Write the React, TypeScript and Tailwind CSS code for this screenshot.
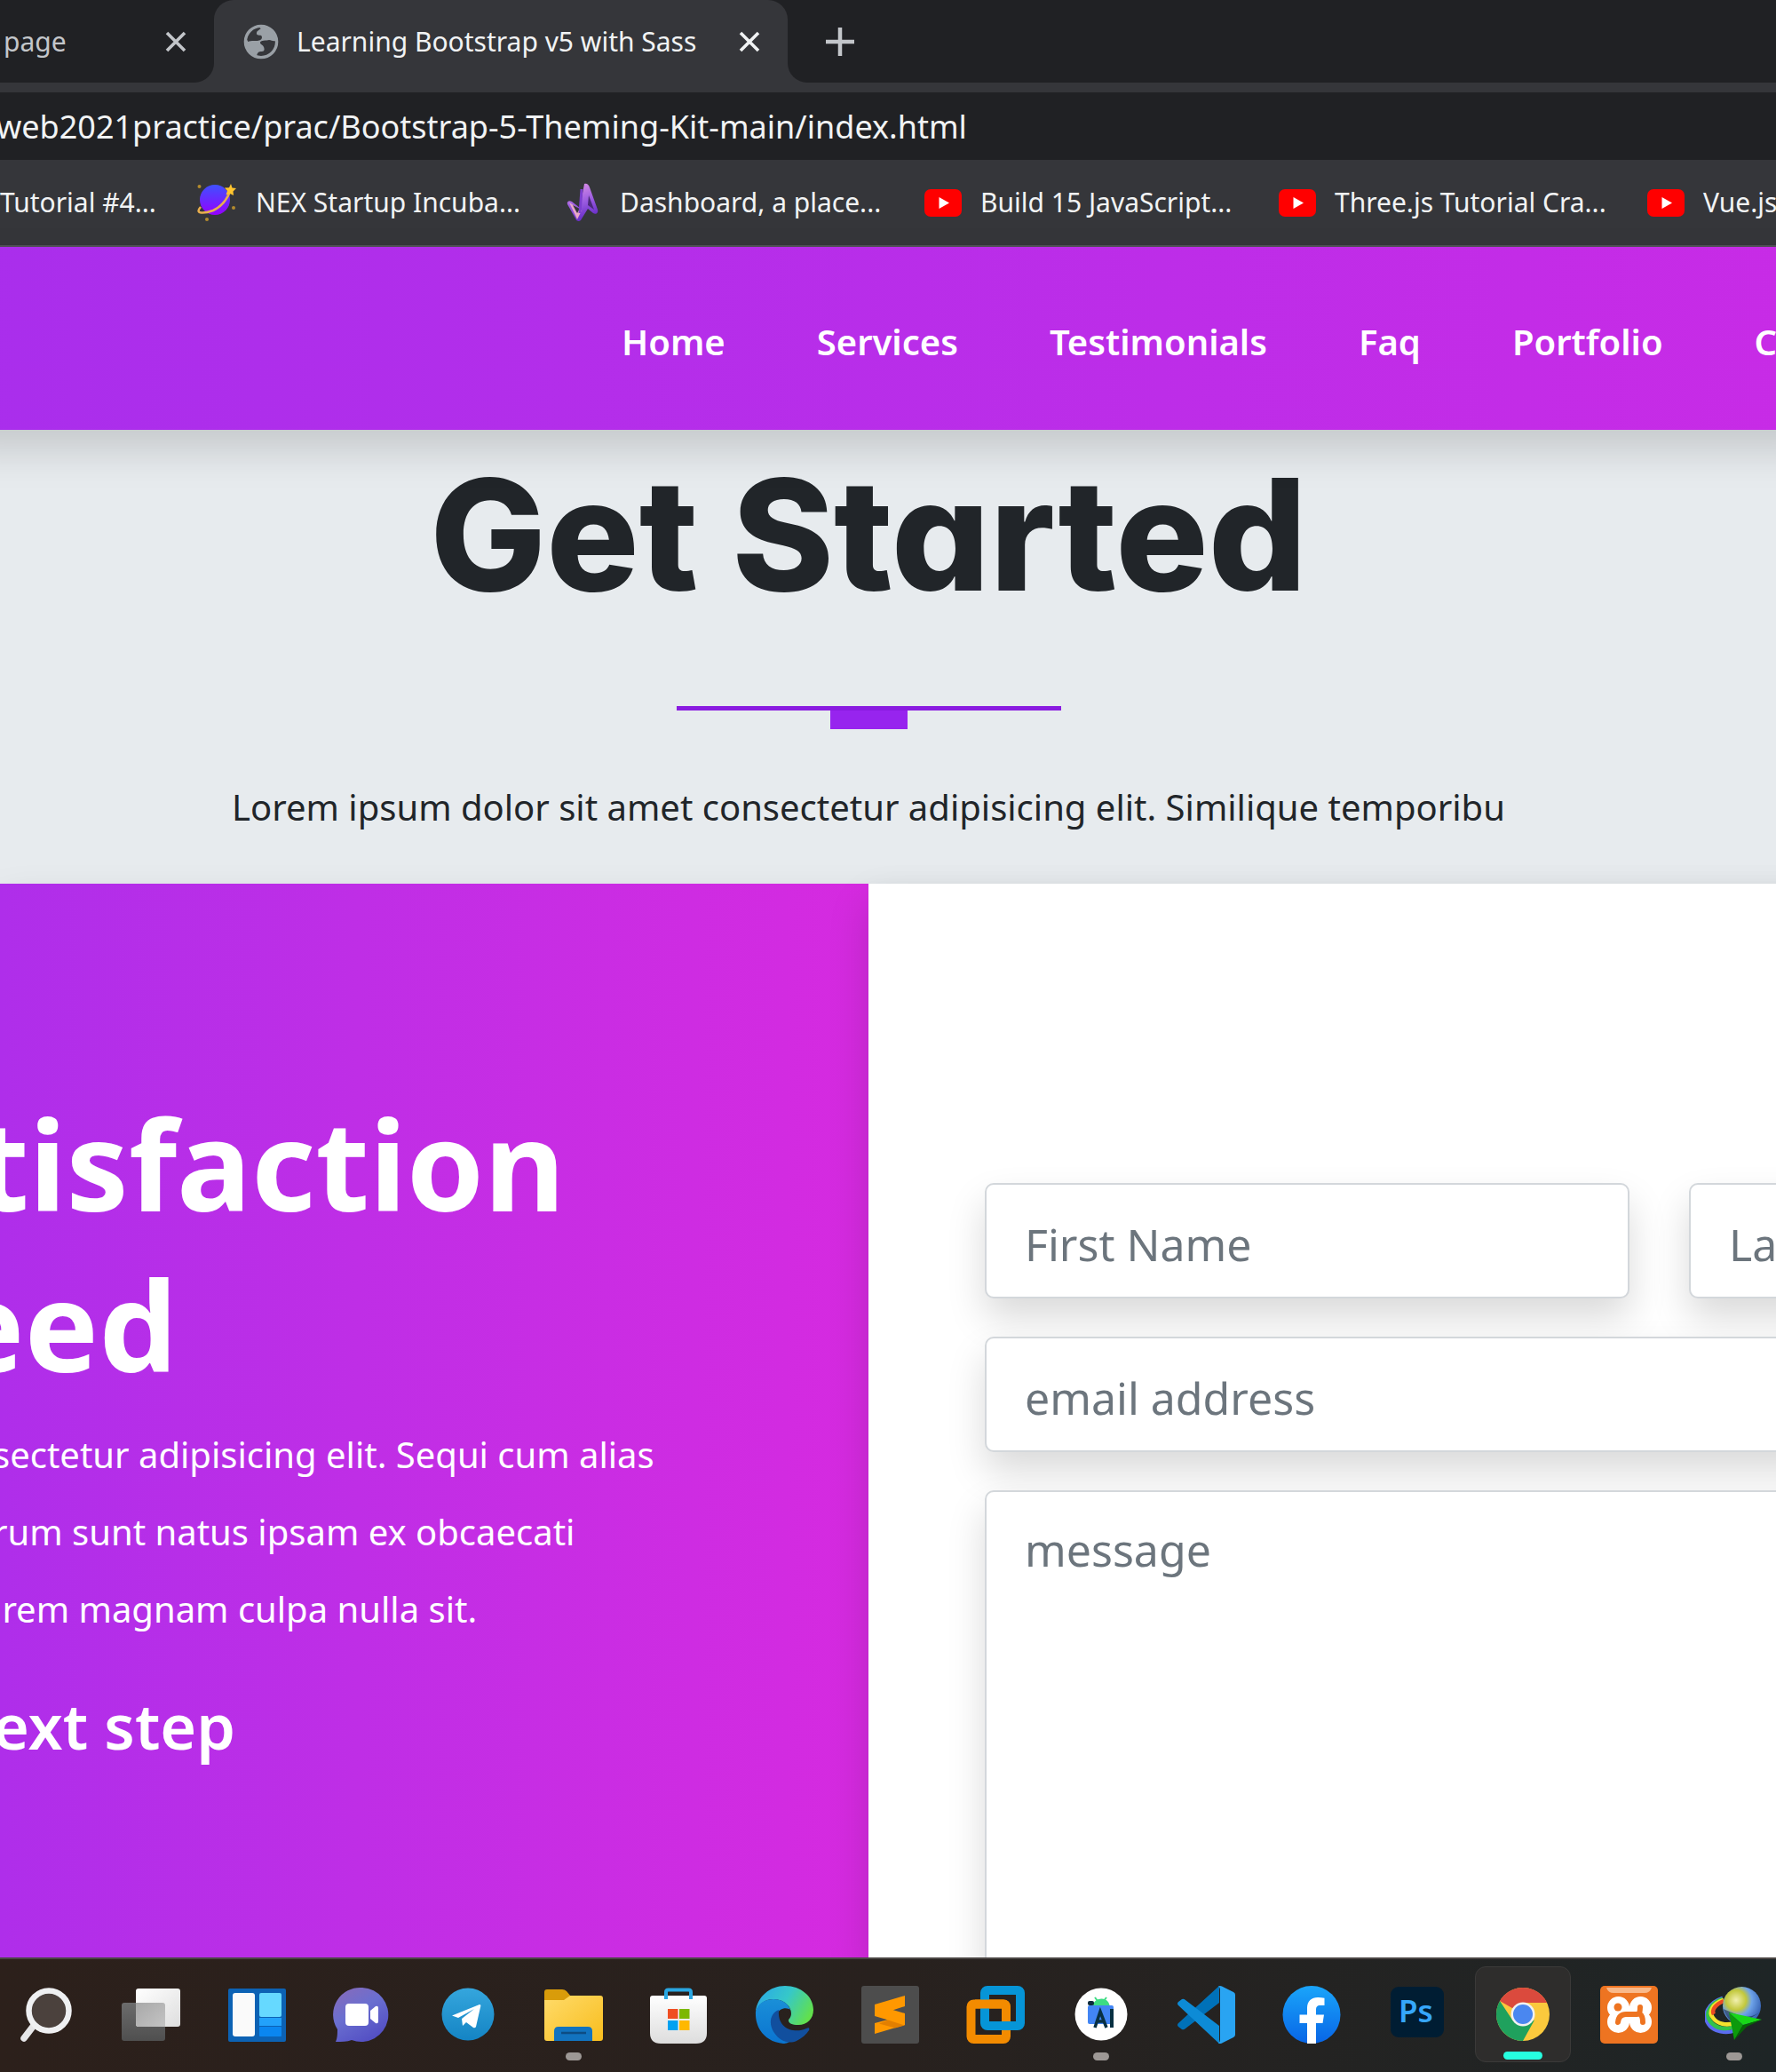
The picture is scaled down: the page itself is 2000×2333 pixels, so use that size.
import type { ReactNode } from "react";

const navLinks = ["Home", "Services", "Testimonials", "Faq", "Portfolio", "Contact"];

function CloseIcon() {
  return (
    <svg viewBox="0 0 24 24" className="size-6" fill="none" stroke="currentColor" strokeWidth="3.6">
      <path d="M2 2 22 22M22 2 2 22" />
    </svg>
  );
}

function GlobeIcon() {
  return (
    <svg viewBox="0 0 40 40" className="size-10 shrink-0">
      <circle cx="20" cy="20" r="17.6" fill="#35363a" stroke="#9aa0a6" strokeWidth="3.4" />
      <path d="M20 3c-2 4-6 4-6 8 0 3 6 1 5 5-1 3-5 3-9 3-3 0-5-1-7 0 0 8 5 14 12 17 1-4 2-5 6-5 3 0 3-3 2-5-1-3-4-3-4-5 0-3 7-2 10-3 3 0 4 2 8 1C36 9 29 3 20 3z" fill="#9aa0a6" />
      <path d="M20 5c-4 3-5 3-5 6 0 3 6 0 6 4 0 4-5 4-9 4-3 0-5 0-7 1 0-8 6-15 15-15z" fill="#35363a" />
    </svg>
  );
}

function PlanetIcon() {
  return (
    <svg viewBox="0 0 44 44" className="size-11 shrink-0">
      <defs>
        <linearGradient id="planet" x1="0" y1="0" x2="0" y2="1">
          <stop offset="0" stopColor="#3f51ff" />
          <stop offset="1" stopColor="#9500ff" />
        </linearGradient>
      </defs>
      <circle cx="20" cy="19" r="17" fill="url(#planet)" />
      <path d="M4 27c-8 9 6 7 14 4C29 26 35 16 38 7" fill="none" stroke="#e8ae4e" strokeWidth="2.6" />
      <path d="m38 1 1.500 4.500 4.500.5-3.500 3.500.5 4.500-4-2-4.500 1.500 1.500-4.500-3-3.500 5-.3z" fill="#ffc52e" />
      <circle cx="2.500" cy="4" r="2" fill="#b38b2d" />
      <circle cx="41" cy="28" r="2" fill="#b38b2d" />
      <circle cx="11" cy="41" r="2" fill="#b38b2d" />
    </svg>
  );
}

function DashboardIcon() {
  return (
    <svg viewBox="0 0 36 44" className="h-11 w-9 shrink-0">
      <defs>
        <linearGradient id="dash" x1="0" y1="0" x2="0.3" y2="1">
          <stop offset="0" stopColor="#e79ae8" />
          <stop offset="0.600" stopColor="#9a5be0" />
          <stop offset="1" stopColor="#6a30c8" />
        </linearGradient>
      </defs>
      <path d="M20 1c3-1 5 1 6 4l9 25c1 4-2 6-5 4l-6-5-8 13c-2 2-5 1-6-2L1 24c-1-3 2-5 5-3l9 7z" fill="url(#dash)" />
      <path d="M3 22 12 41 17 31z" fill="#e9a8c8" />
      <path d="m7 25 5 9 3-5z" fill="#35363a" />
      <path d="m25 14 6 16-7-5z" fill="#4a2a78" />
      <path d="M17 7 15 34" stroke="#7d3fd0" strokeWidth="3" />
    </svg>
  );
}

function YoutubeIcon() {
  return (
    <svg viewBox="0 0 42 31" className="h-[31px] w-[42px] shrink-0">
      <rect width="42" height="31" rx="7" fill="#ff0000" />
      <path d="M16.500 9v13L28 15.500z" fill="#fff" />
    </svg>
  );
}

const bookmarks: { label: string; icon: ReactNode; box: string }[] = [
  { label: "NEX Startup Incuba...", icon: <PlanetIcon />, box: "w-[416px] gap-[22px]" },
  { label: "Dashboard, a place...", icon: <DashboardIcon />, box: "w-[403px] gap-6" },
  { label: "Build 15 JavaScript...", icon: <YoutubeIcon />, box: "w-[399px] gap-[21px]" },
  { label: "Three.js Tutorial Cra...", icon: <YoutubeIcon />, box: "w-[415px] gap-[21px]" },
  { label: "Vue.js Tutorial...", icon: <YoutubeIcon />, box: "w-[415px] gap-[21px]" },
];

function Glyph({ children }: { children: ReactNode }) {
  return (
    <svg viewBox="0 0 66 66" className="size-[66px]">
      {children}
    </svg>
  );
}

const apps: { name: string; state?: "open" | "active"; icon: ReactNode }[] = [
  {
    name: "Search",
    icon: (
      <Glyph>
        <path d="M22 43 9 60" stroke="#e6e6e8" strokeWidth="7.500" strokeLinecap="round" />
        <circle cx="37" cy="29" r="22.500" fill="#4b413d" stroke="#eff0f2" strokeWidth="6.500" />
      </Glyph>
    ),
  },
  {
    name: "Task view",
    icon: (
      <Glyph>
        <defs>
          <linearGradient id="tv1" x1="0" y1="0" x2="1" y2="1">
            <stop offset="0" stopColor="#ffffff" />
            <stop offset="1" stopColor="#dedede" />
          </linearGradient>
          <linearGradient id="tv2" x1="0" y1="0" x2="0" y2="1">
            <stop offset="0" stopColor="#6c6c6c" />
            <stop offset="1" stopColor="#4f4f4f" />
          </linearGradient>
          <linearGradient id="tv3" x1="0" y1="0" x2="1" y2="1">
            <stop offset="0" stopColor="#a8a8a8" />
            <stop offset="1" stopColor="#c4c4c4" />
          </linearGradient>
        </defs>
        <rect x="0" y="20" width="49" height="43" rx="3" fill="url(#tv2)" />
        <rect x="16" y="4" width="50" height="43" rx="3" fill="url(#tv1)" />
        <path d="M16 20h30q3 0 3 3v24H19q-3 0-3-3z" fill="url(#tv3)" />
      </Glyph>
    ),
  },
  {
    name: "Widgets",
    icon: (
      <Glyph>
        <rect x="1" y="4" width="65" height="60" rx="2" fill="#0c62b4" />
        <rect x="6" y="9" width="25" height="49" rx="3" fill="#fafafa" />
        <rect x="36" y="9" width="25" height="27" rx="2" fill="#66d9ff" />
        <rect x="36" y="37" width="25" height="9" fill="#22a2fb" />
        <rect x="36" y="47" width="25" height="11" rx="1" fill="#0a86f0" />
      </Glyph>
    ),
  },
  {
    name: "Chat",
    icon: (
      <Glyph>
        <defs>
          <linearGradient id="chat" x1="0" y1="0" x2="0.600" y2="1">
            <stop offset="0" stopColor="#8a6ab8" />
            <stop offset="0.500" stopColor="#6a6fd0" />
            <stop offset="1" stopColor="#5450c4" />
          </linearGradient>
        </defs>
        <path d="M33 3a30.500 30.500 0 1 1-12 59c-5 2-12 2-18 2 2-4 2-9 2-14A30.500 30.500 0 0 1 33 3z" fill="url(#chat)" />
        <rect x="14" y="21" width="26" height="25" rx="4" fill="#fff" />
        <path d="m42 29 6-5q3-1 3 2v15q0 3-3 2l-6-5z" fill="#fff" />
      </Glyph>
    ),
  },
  {
    name: "Telegram",
    icon: (
      <Glyph>
        <defs>
          <linearGradient id="tg" x1="0" y1="0" x2="0" y2="1">
            <stop offset="0" stopColor="#35a6dd" />
            <stop offset="1" stopColor="#1484c4" />
          </linearGradient>
        </defs>
        <circle cx="33" cy="33" r="29.500" fill="url(#tg)" />
        <path d="M15 34.500 46 22q2 0 1 3l-5 22q-1 2-3 1l-8-6-4 4-1-8 14-11-18 10z" fill="#fff" />
      </Glyph>
    ),
  },
  {
    name: "File Explorer",
    state: "open",
    icon: (
      <Glyph>
        <defs>
          <linearGradient id="fold" x1="0" y1="0" x2="1" y2="1">
            <stop offset="0" stopColor="#ffdb6a" />
            <stop offset="1" stopColor="#f8bd1d" />
          </linearGradient>
        </defs>
        <path d="M3 5h17q3 0 5 2l5 6v7H0V8q0-3 3-3z" fill="#d99c0a" />
        <path d="M0 17h22l7-5h34q3 0 3 3v45q0 3-3 3H3q-3 0-3-3z" fill="url(#fold)" />
        <path d="M11 63V52q0-5 5-5h33q5 0 5 5v11z" fill="#1273bf" />
        <path d="M19 54h28" stroke="#0d4c83" strokeWidth="2.500" />
      </Glyph>
    ),
  },
  {
    name: "Microsoft Store",
    icon: (
      <Glyph>
        <defs>
          <linearGradient id="store" x1="0" y1="0" x2="0" y2="1">
            <stop offset="0" stopColor="#ffffff" />
            <stop offset="1" stopColor="#dddddd" />
          </linearGradient>
        </defs>
        <path d="M4 12h58q3 0 3 3v39q0 12-12 12H13Q1 66 1 54V15q0-3 3-3z" fill="url(#store)" />
        <path d="M19 16V8q0-2.500 2.500-2.500h23Q47 5.500 47 8v8" fill="none" stroke="#2aa7e2" strokeWidth="4" />
        <rect x="21" y="27" width="11.500" height="11" fill="#f04e22" />
        <rect x="34" y="27" width="11.500" height="11" fill="#7cb800" />
        <rect x="21" y="40" width="11.500" height="11" fill="#00a1f0" />
        <rect x="34" y="40" width="11.500" height="11" fill="#ffb800" />
      </Glyph>
    ),
  },
  {
    name: "Microsoft Edge",
    icon: (
      <Glyph>
        <defs>
          <linearGradient id="e1" x1="0" y1="0.200" x2="1" y2="0.600">
            <stop offset="0" stopColor="#2aa9e6" />
            <stop offset="0.500" stopColor="#36c8c9" />
            <stop offset="1" stopColor="#62e04c" />
          </linearGradient>
          <linearGradient id="e2" x1="0" y1="0" x2="0" y2="1">
            <stop offset="0" stopColor="#1a8fd8" />
            <stop offset="1" stopColor="#0a74d0" />
          </linearGradient>
        </defs>
        <path d="M1 30C3 13 17 1 34 1c18 0 32 12 32 27 0 10-7 17-17 17-7 0-11-2-11-5 0-2 3-3 3-8 0-7-7-16-20-16C11 16 4 22 1 30z" fill="url(#e1)" />
        <path d="M1 30c2-9 10-14 20-14 11 0 17 6 19 12-3-3-13-3-15 6-2 12 6 24 18 27-4 4-8 5-11 5C11 64 0 48 1 30z" fill="url(#e2)" />
        <path d="M27 28c-10 4-12 16-5 26 6 9 16 13 25 9 6-3 11-7 14-12 1-2 0-4-3-2-13 6-33 1-31-21z" fill="#114f9e" />
      </Glyph>
    ),
  },
  {
    name: "Sublime Text",
    icon: (
      <Glyph>
        <rect x="1" y="1" width="65" height="65" rx="3" fill="#4d4d4d" />
        <path d="m16 43 34-9v11L16 55z" fill="#ff9800" />
        <path d="m16 22 34-10v12l-34 11z" fill="#ff9800" />
        <path d="m16 22 34 10v13L16 35z" fill="#ff9800" />
        <path d="m31 39.500 19 6-11 3-18-5z" fill="#e27f00" />
      </Glyph>
    ),
  },
  {
    name: "VMware Workstation",
    icon: (
      <Glyph>
        <rect x="5.500" y="21.500" width="39.500" height="39.500" rx="3" fill="none" stroke="#f38b00" strokeWidth="10" />
        <rect x="21" y="6" width="40" height="40" rx="3" fill="none" stroke="#0695d7" strokeWidth="10" />
        <path d="M10 21.500h32q3 0 3 3V40" fill="none" stroke="#f38b00" strokeWidth="10" />
      </Glyph>
    ),
  },
  {
    name: "Android Studio",
    state: "open",
    icon: (
      <Glyph>
        <circle cx="33" cy="33" r="29.500" fill="#fff" />
        <path d="M23 24q2-8 10-8.500t10 8.500z" fill="#3ddc84" />
        <path d="m26 14 3 4m10-4-3 4" stroke="#3ddc84" strokeWidth="2" />
        <rect x="18" y="23" width="29" height="21" rx="2" fill="#4285f4" />
        <rect x="18" y="18" width="7" height="5" rx="2" fill="#0c2a3a" />
        <path d="m26 48 6-18 7 18m-10-7h8" fill="none" stroke="#083042" strokeWidth="3.500" />
        <path d="M45 27v21" stroke="#083042" strokeWidth="4" />
      </Glyph>
    ),
  },
  {
    name: "Visual Studio Code",
    icon: (
      <Glyph>
        <path d="M48 1 2 43q-2 2 0 4l4 3q2 1 4-1l38-29z" fill="#0071b8" />
        <path d="M48 66 2 23q-2-2 0-4l4-3q2-1 4 1l38 29z" fill="#0d8bd6" />
        <path d="M47 1.500q2-1 4 0l13 6.500q2 1 2 3v45q0 2-2 3l-13 6.500q-2 1-4 0 2-1 2-4v-56q0-3-2-4z" fill="#29a4f2" />
      </Glyph>
    ),
  },
  {
    name: "Facebook",
    icon: (
      <Glyph>
        <defs>
          <linearGradient id="fb" x1="0" y1="0" x2="0" y2="1">
            <stop offset="0" stopColor="#1aa5fa" />
            <stop offset="1" stopColor="#0865e6" />
          </linearGradient>
        </defs>
        <circle cx="33" cy="33.500" r="32.500" fill="url(#fb)" />
        <path d="M28 66V43h-8.500v-9.500H28v-7.500c0-8 5-12 12-12q4 0 7.500.8V23H43c-4 0-5 2-5 5v5.500h9l-1.500 9.500H38v23z" fill="#fff" />
      </Glyph>
    ),
  },
  {
    name: "Photoshop",
    icon: (
      <Glyph>
        <rect x="3" y="2" width="60" height="57" rx="9" fill="#001d33" />
        <text x="12" y="42" fontFamily="Noto Sans, sans-serif" fontWeight="600" fontSize="35" fill="#36a7fb">Ps</text>
      </Glyph>
    ),
  },
  {
    name: "Google Chrome",
    state: "active",
    icon: (
      <Glyph>
        <circle cx="33" cy="33" r="30" fill="#fbc93d" />
        <path d="M33 33 7 18a30 30 0 0 1 52 0l1 2H33z" fill="#db4a3d" />
        <path d="M7 18a30 30 0 0 0 26 45l13-23.500L33 46 21.500 40z" fill="#1fa15d" />
        <circle cx="33" cy="33" r="13.500" fill="#f1f1f1" />
        <circle cx="33" cy="33" r="11" fill="#4a87f0" />
      </Glyph>
    ),
  },
  {
    name: "XAMPP",
    icon: (
      <Glyph>
        <rect x="1" y="1" width="65" height="65" rx="5" fill="#ee7421" />
        <path d="M8 3h51q-2 6-8 6H16Q10 9 8 3z" fill="#f9b98a" />
        <g fill="#fff">
          <circle cx="21.500" cy="25.500" r="12.500" />
          <circle cx="46.500" cy="25.500" r="12.500" />
          <circle cx="21.500" cy="41.500" r="12.500" />
          <circle cx="46.500" cy="41.500" r="12.500" />
          <rect x="14" y="24" width="40" height="19" />
        </g>
        <path d="M21 42q1-9 9-9h13q3 0 3-8m0 8q3 2 3 9" fill="none" stroke="#ee7421" strokeWidth="6" strokeLinecap="round" strokeLinejoin="round" />
        <circle cx="21" cy="25" r="4.500" fill="#ee7421" />
      </Glyph>
    ),
  },
  {
    name: "Internet Download Manager",
    state: "open",
    icon: (
      <Glyph>
        <defs>
          <radialGradient id="idm" cx="0.350" cy="0.350" r="0.750">
            <stop offset="0" stopColor="#f2f0b0" />
            <stop offset="0.350" stopColor="#c2c83c" />
            <stop offset="0.550" stopColor="#6fa4ea" />
            <stop offset="1" stopColor="#2a55a8" />
          </radialGradient>
        </defs>
        <g fill="none" strokeWidth="4.500">
          <path d="M20 15C4 20-3 34 4 44c6 9 20 11 30 7" stroke="#5a6cf0" />
          <path d="M20 16C7 20-1 32 6 41c6 8 17 10 27 6" stroke="#33c24a" />
          <path d="M21 17C9 21 3 30 9 37c5 7 15 9 24 6" stroke="#f4e22c" />
          <path d="M21 18C12 22 7 28 10 33" stroke="#ec4b22" />
        </g>
        <circle cx="41.500" cy="23.500" r="21.500" fill="url(#idm)" />
        <path d="M20.500 27q6 16 19 18l22-14Q50 38 40 35z" fill="#14203a" opacity="0.550" />
        <path d="m27 31 37 8-21 6z" fill="#18d818" />
        <path d="m27 31 16 14-10 17z" fill="#0c9a0c" />
        <path d="m33 62 10-17 21-6-17 8z" fill="#066406" />
      </Glyph>
    ),
  },
];

const field =
  "block rounded-[10px] border-2 border-[#d3d7db] bg-white px-[43px] text-[50px] text-[#212529] shadow-[0_22px_43px_rgba(0,0,0,0.15)] outline-none placeholder:text-[#6c757d] placeholder:opacity-100";

function BrowserChrome() {
  return (
    <header className="bg-[#35363a] text-[30px] leading-[44px] whitespace-nowrap text-[#f1f3f4]">
      <div className="flex h-[93px]">
        <div className="flex w-[241px] shrink-0 items-center justify-between rounded-br-[22px] bg-[#202124] pr-[31px] pl-1 text-[#c3c6ca]">
          <span>page</span>
          <button aria-label="Close page">
            <CloseIcon />
          </button>
        </div>
        <div className="shrink-0 bg-[#202124]">
          <div className="flex h-full w-[646px] items-center rounded-t-[22px] bg-[#35363a] pr-[31px] pl-[33px]">
            <GlobeIcon />
            <span className="ml-5 flex-1">Learning Bootstrap v5 with Sass</span>
            <button aria-label="Close tab">
              <CloseIcon />
            </button>
          </div>
        </div>
        <div className="flex flex-1 items-center rounded-bl-[22px] bg-[#202124] pl-[42px]">
          <button aria-label="New tab" className="text-[#c3c6ca]">
            <svg viewBox="0 0 34 34" className="size-[34px]" stroke="currentColor" strokeWidth="4.500">
              <path d="M17 1v32M1 17h32" />
            </svg>
          </button>
        </div>
      </div>
      <div className="mt-[11px] h-[76px] bg-[#202124]">
        <input
          aria-label="Address"
          className="-ml-1 block h-full w-full bg-transparent text-[36px] outline-none"
          defaultValue="web2021practice/prac/Bootstrap-5-Theming-Kit-main/index.html"
        />
      </div>
      <nav aria-label="Bookmarks" className="flex h-[98px] items-center overflow-hidden border-b-2 border-[#505156]">
        <a href="#tutorial" className="w-[222px] shrink-0">
          Tutorial #4...
        </a>
        {bookmarks.map((b) => (
          <a key={b.label} href="#bookmark" className={`flex shrink-0 items-center ${b.box}`}>
            {b.icon}
            <span>{b.label}</span>
          </a>
        ))}
      </nav>
    </header>
  );
}

function Taskbar() {
  return (
    <footer className="relative z-10 overflow-hidden border-t-2 border-[#4a4543] bg-linear-to-r from-[#2c201b] via-[#28211e] to-[#1e2526]">
      <div className="-mr-3 -ml-2 grid grid-cols-[repeat(17,minmax(0,1fr))] pt-2 pb-[11px]">
        {apps.map((app) => (
          <div key={app.name} className="flex justify-center">
            <button
              aria-label={app.name}
              className={`relative flex size-[108px] items-center justify-center rounded-xl ${
                app.state === "active" ? "border border-[#3b3a39] bg-[#2e2d2c]" : ""
              }`}
            >
              {app.icon}
              {app.state === "open" && <span className="absolute bottom-0.5 h-[9px] w-[18px] rounded-full bg-[#9d9895]" />}
              {app.state === "active" && <span className="absolute bottom-0.5 h-[9px] w-11 rounded-full bg-[#26ffe0]" />}
            </button>
          </div>
        ))}
      </div>
    </footer>
  );
}

export default function App() {
  return (
    <div className="flex min-h-screen flex-col overflow-hidden bg-[#e7ebee] font-['Noto_Sans',sans-serif]">
      <BrowserChrome />

      <nav
        aria-label="Main"
        className="relative z-10 -mx-12 flex h-[206px] items-center gap-[103px] bg-linear-to-r from-[#a92eec] to-[#c82be6] pt-2 pl-[748px] text-[40px] font-semibold whitespace-nowrap text-white shadow-[0_22px_43px_rgba(0,0,0,0.15)]"
      >
        {navLinks.map((label) => (
          <a key={label} href="#section">
            {label}
          </a>
        ))}
      </nav>

      <section className="flex w-[1956px] flex-col items-center pt-6 pb-[54px]">
        <h1 className="font-['Inter',sans-serif] text-[174px] leading-[188px] font-extrabold text-[#212529] [font-feature-settings:'cv11']">
          Get Started
        </h1>
        <div className="mt-[99px] flex h-[26px] w-[433px] justify-center border-t-[5px] border-[#8a1be0]">
          <div className="w-[87px] bg-[#9724ee]" />
        </div>
        <p className="mt-[56px] text-[40px] leading-[64px] whitespace-nowrap text-[#212529]">
          Lorem ipsum dolor sit amet consectetur adipisicing elit. Similique temporibu
        </p>
      </section>

      <main className="-mr-12 flex flex-1 shadow-[0_22px_43px_rgba(0,0,0,0.15)]">
        <section className="w-[978px] shrink-0 overflow-hidden bg-linear-to-r from-[#af2eea] to-[#d62ae0] pt-[224px] whitespace-nowrap text-white">
          <h2 className="text-[140px] leading-[181px] font-bold">
            <span className="-ml-7 block">tisfaction</span>
            <span className="-ml-14 block">eed</span>
          </h2>
          <p className="-ml-2 pt-[13px] text-[40px] leading-[87px]">
            sectetur adipisicing elit. Sequi cum alias
            <br />
            rum sunt natus ipsam ex obcaecati
            <br />
            &nbsp;rem magnam culpa nulla sit.
          </p>
          <h3 className="-ml-2 pt-[42px] text-[70px] leading-[92px] font-semibold">ext step</h3>
        </section>

        <section className="min-w-0 flex-1 bg-white pt-[337px] pl-[131px] shadow-[0_22px_43px_rgba(0,0,0,0.15)]">
          <form className="flex h-full w-[1519px] flex-col gap-[43px]">
            <div className="flex gap-[67px]">
              <input aria-label="First Name" placeholder="First Name" className={`${field} h-[130px] min-w-0 flex-1 pt-2`} />
              <input aria-label="Last Name" placeholder="Last Name" className={`${field} h-[130px] min-w-0 flex-1 pt-2`} />
            </div>
            <input aria-label="email address" type="email" placeholder="email address" className={`${field} h-[130px] pt-2`} />
            <textarea
              aria-label="message"
              placeholder="message"
              className={`${field} -mb-4 min-h-[400px] flex-1 resize-none pt-[30px] leading-[70px]`}
            />
          </form>
        </section>
      </main>

      <Taskbar />
    </div>
  );
}
